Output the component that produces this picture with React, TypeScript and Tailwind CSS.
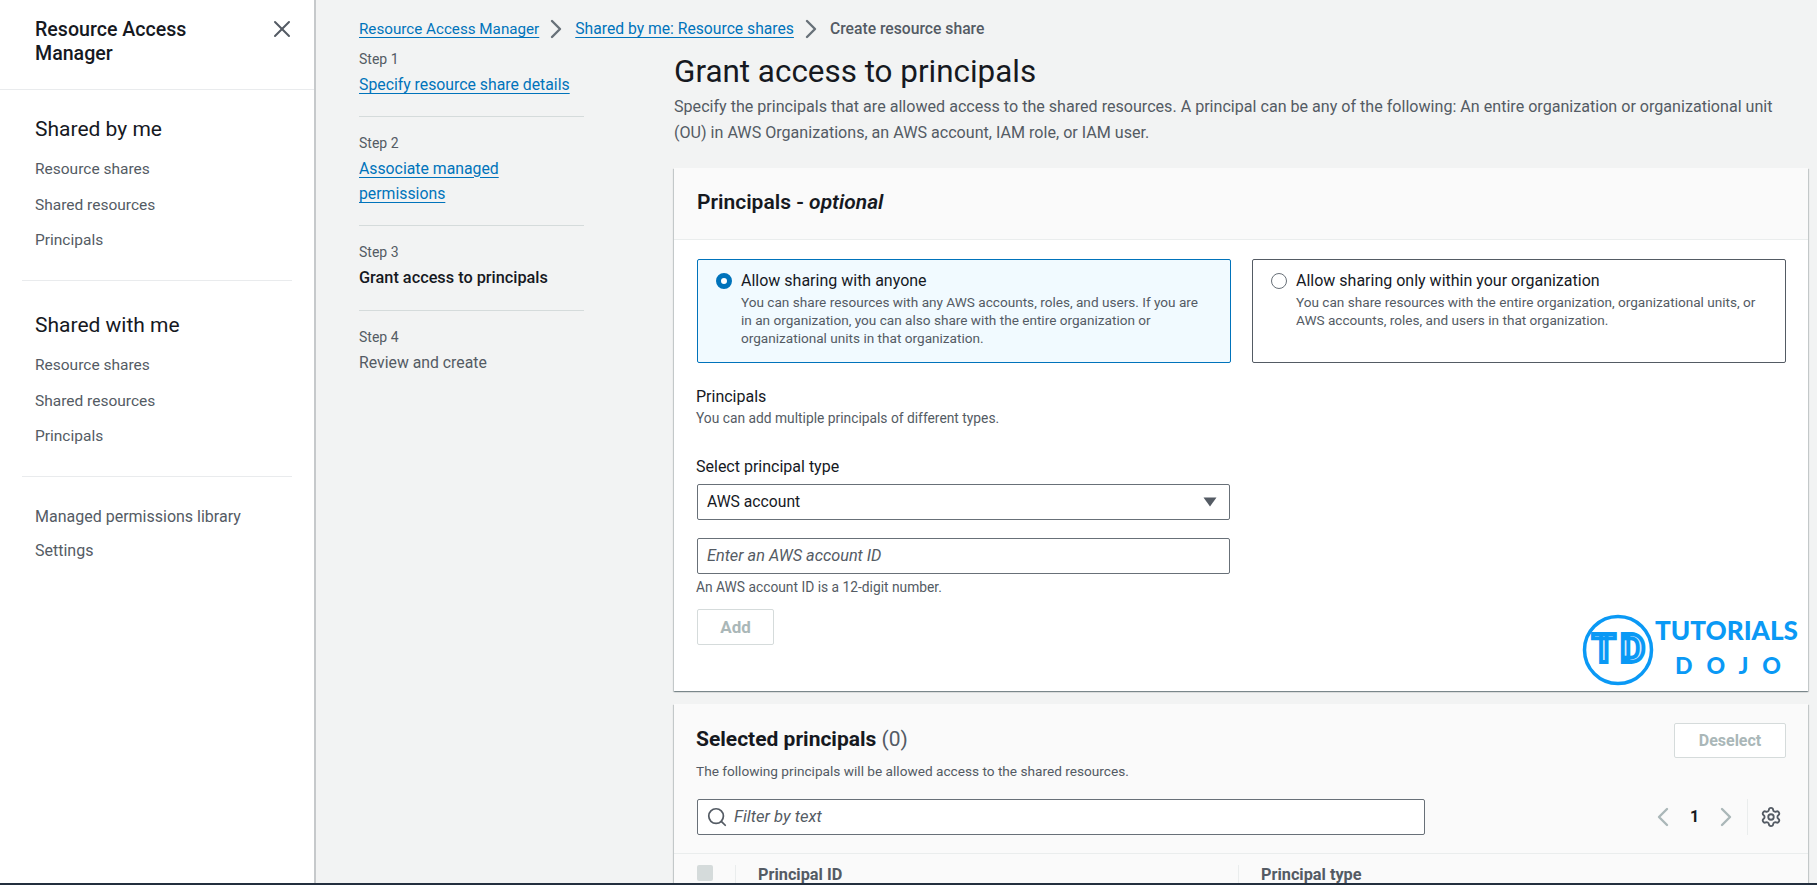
import type { ReactNode } from "react";
import { X, Search, ChevronLeft, ChevronRight, Settings } from "lucide-react";

function SideGroup({ title, items, first }: { title: string; items: string[]; first?: boolean }) {
  return (
    <div className={"mx-[22px] border-b border-[#e9ebed] pl-[13px] pb-[28px] " + (first ? "pt-[23px]" : "pt-[28px]")}>
      <h2 className="text-[21px] leading-[32px] text-[#16191f]">{title}</h2>
      <ul className="mt-[12px] flex flex-col gap-[11.5px]">
        {items.map((i) => (
          <li key={i} className="text-[15.5px] leading-[24px] text-[#545b64]">{i}</li>
        ))}
      </ul>
    </div>
  );
}

function Step({ n, last, children }: { n: number; last?: boolean; children: ReactNode }) {
  return (
    <div className={"mb-[16px] pb-[18px] " + (last ? "" : "border-b border-[#d5dbdb]")}>
      <div className="text-[14px] leading-[20px] text-[#545b64]">Step {n}</div>
      <div className="mt-[3px] text-[15.8px] leading-[25.5px]">{children}</div>
    </div>
  );
}

function StepLink({ children }: { children: ReactNode }) {
  return <a className="text-[#0073bb] underline underline-offset-[3px]">{children}</a>;
}

function RadioCard({ on, title, desc }: { on?: boolean; title: string; desc: string }) {
  return (
    <div className={"flex h-[104px] flex-1 gap-[9px] rounded-[2px] border px-[18px] pt-[11px] " + (on ? "border-[#0073bb] bg-[#f1faff]" : "border-[#545b64] bg-white")}>
      <span className={"mt-[2px] h-[16px] w-[16px] shrink-0 rounded-full " + (on ? "border-[5px] border-[#0073bb] bg-white" : "border-[1.5px] border-[#687078] bg-white")} />
      <div>
        <div className="text-[16px] leading-[20px] text-[#16191f]">{title}</div>
        <div className="mt-[2px] text-[13.6px] leading-[18px] text-[#545b64]">{desc}</div>
      </div>
    </div>
  );
}

function Logo() {
  return (
    <svg className="absolute right-0 bottom-[2px] overflow-visible" width="228" height="78" viewBox="0 0 228 78">
      <circle cx="38" cy="39" r="33.5" fill="none" stroke="#0a99f5" strokeWidth="3.5" />
      <text x="38.5" y="50.5" textAnchor="middle" textLength="53" lengthAdjust="spacing" fontFamily="Roboto, sans-serif" fontWeight="700" fontSize="38" fill="#d8effd" stroke="#0a99f5" strokeWidth="3.8">TD</text>
      <text x="75" y="29" textLength="143" lengthAdjust="spacingAndGlyphs" fontFamily="Lato, sans-serif" fontWeight="900" fontSize="26" fill="#0a99f5">TUTORIALS</text>
      <text x="95" y="63" textLength="106" lengthAdjust="spacing" fontFamily="Lato, sans-serif" fontWeight="900" fontSize="23" fill="#0a99f5">DOJO</text>
    </svg>
  );
}

const cardShadow = "shadow-[0_1px_1px_0_rgba(0,28,36,0.3),1px_1px_1px_0_rgba(0,28,36,0.15),-1px_1px_1px_0_rgba(0,28,36,0.15)]";

export default function App() {
  return (
    <div className="flex h-[885px] w-[1817px] overflow-hidden border-b-2 border-[#232f3e] bg-[#f2f3f3] font-['Roboto',sans-serif]">
      <aside className="h-full w-[316px] shrink-0 border-r-2 border-[#c6c9cb] bg-white">
        <div className="flex h-[90px] items-start justify-between border-b border-[#e9ebed] pl-[35px] pr-[22px] pt-[18px]">
          <div className="w-[200px] text-[19.6px] font-medium leading-[24px] text-[#16191f]">Resource Access Manager</div>
          <X className="-mr-[4px] -mt-[3px] h-[28px] w-[28px] text-[#545b64]" strokeWidth={1.7} />
        </div>
        <SideGroup first title="Shared by me" items={["Resource shares", "Shared resources", "Principals"]} />
        <SideGroup title="Shared with me" items={["Resource shares", "Shared resources", "Principals"]} />
        <ul className="flex flex-col gap-[10px] pl-[35px] pt-[28px]">
          <li className="text-[16px] leading-[24px] text-[#545b64]">Managed permissions library</li>
          <li className="text-[16px] leading-[24px] text-[#545b64]">Settings</li>
        </ul>
      </aside>

      <main className="min-w-0 flex-1 pl-[43px] pr-[9px] pt-[17px]">
        <nav className="flex h-[24px] items-center text-[15.7px] leading-[24px]">
          <span className="text-[15.2px]"><StepLink>Resource Access Manager</StepLink></span>
          <ChevronRight className="ml-[1px] mr-[3px] h-[32px] w-[32px] text-[#687078]" strokeWidth={1.8} />
          <StepLink>Shared by me: Resource shares</StepLink>
          <ChevronRight className="ml-[1px] mr-[3px] h-[32px] w-[32px] text-[#687078]" strokeWidth={1.8} />
          <span className="font-medium text-[#545b64]">Create resource share</span>
        </nav>

        <div className="flex">
          <div className="w-[225px] shrink-0 pt-[8px]">
            <Step n={1}><StepLink>Specify resource share details</StepLink></Step>
            <Step n={2}><StepLink>Associate managed permissions</StepLink></Step>
            <Step n={3}><span className="inline-block pb-[2px] text-[16.3px] font-medium text-[#16191f]">Grant access to principals</span></Step>
            <Step n={4} last><span className="text-[#545b64]">Review and create</span></Step>
          </div>

          <div className="ml-[90px] min-w-0 flex-1">
            <h1 className="pt-[11px] text-[31.4px] font-normal leading-[40px] text-[#16191f]">Grant access to principals</h1>
            <p className="mt-[2px] w-[1125px] text-[16.1px] leading-[25.5px] text-[#545b64]">
              Specify the principals that are allowed access to the shared resources. A principal can be any of the following: An entire organization or organizational unit (OU) in AWS Organizations, an AWS account, IAM role, or IAM user.
            </p>

            <section className={"relative mt-[23px] h-[523px] bg-white " + cardShadow}>
              <div className="flex h-[72px] items-center border-b border-[#eaeded] bg-[#fafafa] pb-[1px] pl-[23px] pr-[22px]">
                <h2 className="text-[21px] font-semibold text-[#16191f]">Principals - <i>optional</i></h2>
              </div>
              <div className="pl-[23px] pr-[22px] pt-[19px]">
                <div className="flex gap-[21px]">
                  <RadioCard on title="Allow sharing with anyone" desc="You can share resources with any AWS accounts, roles, and users. If you are in an organization, you can also share with the entire organization or organizational units in that organization." />
                  <RadioCard title="Allow sharing only within your organization" desc="You can share resources with the entire organization, organizational units, or AWS accounts, roles, and users in that organization." />
                </div>
                <div className="-ml-px mt-[22px] text-[16px] leading-[24px] text-[#16191f]">Principals</div>
                <div className="-ml-px text-[13.8px] leading-[18px] text-[#545b64]">You can add multiple principals of different types.</div>
                <div className="-ml-px mt-[28px] text-[16px] leading-[24px] text-[#16191f]">Select principal type</div>
                <div className="mt-[5px] flex h-[36px] w-[533px] items-center justify-between rounded-[2px] border border-[#687078] bg-white pl-[9px] pr-[12px] text-[15.7px] text-[#16191f]">
                  AWS account
                  <svg width="14" height="10" viewBox="0 0 14 10"><path d="M0.5 0.5h13L7 9.5z" fill="#545b64" /></svg>
                </div>
                <div className="mt-[18px] flex h-[36px] w-[533px] items-center rounded-[2px] border border-[#687078] bg-white pl-[9px] text-[16.3px] italic text-[#545b64]">Enter an AWS account ID</div>
                <div className="-ml-px mt-[4px] text-[13.8px] leading-[18px] text-[#545b64]">An AWS account ID is a 12-digit number.</div>
                <button className="mt-[13px] h-[36px] w-[77px] rounded-[2px] border border-[#d5dbdb] bg-white pt-[1px] text-[17px] font-bold text-[#aab7b8]">Add</button>
              </div>
              <Logo />
            </section>

            <section className={"mt-[13px] bg-[#fafafa] " + cardShadow}>
              <div className="border-b border-[#eaeded] pb-[18px] pl-[23px] pr-[22px] pt-[19px]">
                <div className="flex items-start justify-between">
                  <div className="-ml-px pt-[1px]">
                    <h2 className="text-[21px] font-bold leading-[30px] text-[#16191f]">Selected principals <span className="font-normal text-[#545b64]">(0)</span></h2>
                    <div className="mt-[8px] text-[13.65px] leading-[18px] text-[#545b64]">The following principals will be allowed access to the shared resources.</div>
                  </div>
                  <button className="h-[35px] w-[112px] rounded-[2px] border border-[#d5dbdb] bg-white text-[16px] font-bold text-[#aab7b8]">Deselect</button>
                </div>
                <div className="mt-[19px] flex items-center justify-between">
                  <div className="flex h-[36px] w-[728px] items-center gap-[6px] rounded-[2px] border border-[#687078] bg-white pl-[8px] text-[16.6px] italic text-[#545b64]">
                    <Search className="h-[22px] w-[22px] text-[#545b64]" strokeWidth={1.9} />
                    Filter by text
                  </div>
                  <div className="flex h-[36px] items-center">
                    <ChevronLeft className="h-[32px] w-[32px] text-[#aab7b8]" strokeWidth={1.8} />
                    <span className="w-[31px] text-center text-[16px] font-bold text-[#16191f]">1</span>
                    <ChevronRight className="h-[32px] w-[32px] text-[#aab7b8]" strokeWidth={1.8} />
                    <span className="ml-[5px] mr-[12px] h-[36px] w-px bg-[#eaeded]" />
                    <Settings className="mr-[4px] h-[22px] w-[22px] text-[#545b64]" strokeWidth={2} />
                  </div>
                </div>
              </div>
              <div className="flex h-[40px] items-start pl-[23px] pt-[11px]">
                <span className="h-[16px] w-[16px] rounded-[2px] bg-[#d5dbdb]" />
                <span className="ml-[22px] h-[28px] w-px bg-[#eaeded]" />
                <span className="ml-[22px] w-[480px] text-[16.3px] font-bold leading-[20px] text-[#545b64]">Principal ID</span>
                <span className="h-[28px] w-px bg-[#eaeded]" />
                <span className="ml-[22px] text-[16.3px] font-bold leading-[20px] text-[#545b64]">Principal type</span>
              </div>
            </section>
          </div>
        </div>
      </main>
    </div>
  );
}
